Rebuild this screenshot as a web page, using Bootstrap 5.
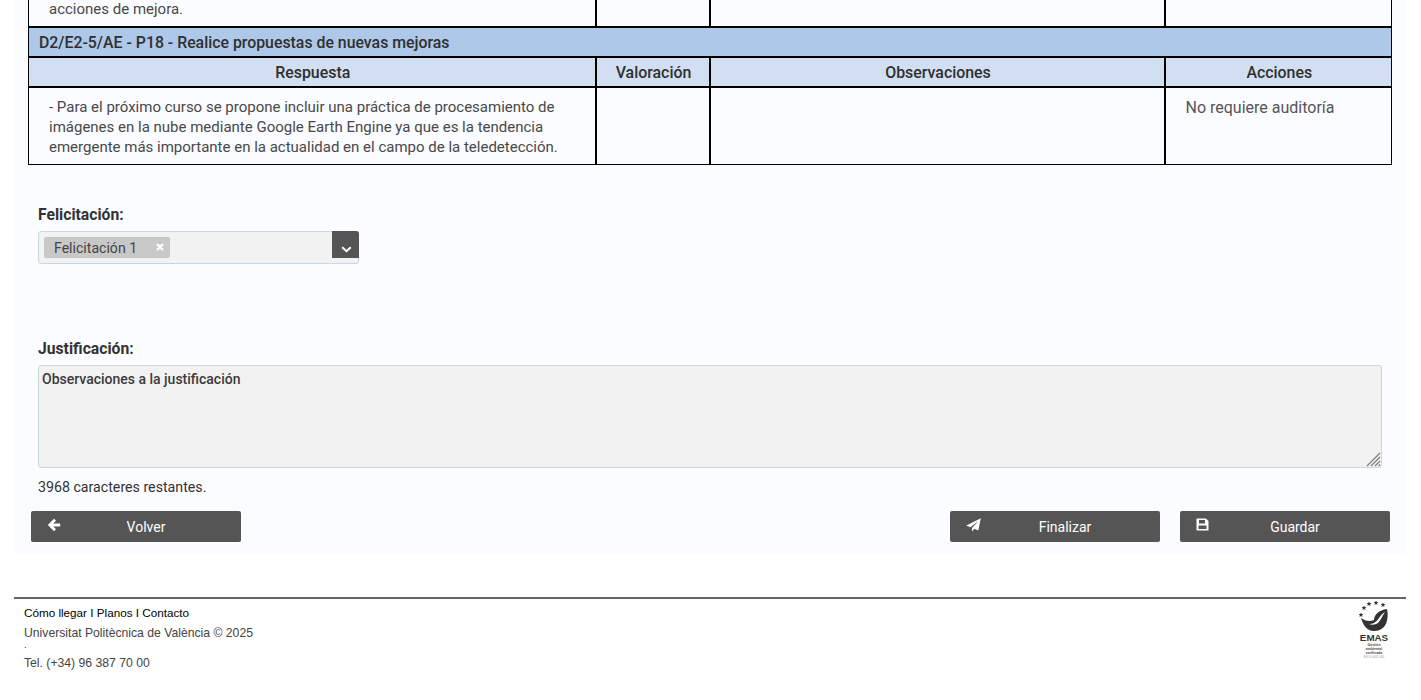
<!DOCTYPE html>
<html lang="es">
<head>
<meta charset="utf-8">
<title>Auditoría</title>
<link href="https://cdn.jsdelivr.net/npm/bootstrap@5.3.0/dist/css/bootstrap.min.css" rel="stylesheet">
<style>
html,body{height:700px;overflow:hidden}
body{background:#fff;font-family:Roboto,sans-serif;color:#333;font-size:15px}
.sheet{margin:-2px 15px 0 14px;background:#fbfcff;height:556px;padding:0 14px}
.audit{width:1363px;table-layout:fixed;border-collapse:collapse;margin:0}
.audit td,.audit th{border:1px solid #000;border-left-width:2px;border-right-width:2px;padding:0;color:#484848;background:transparent}
.audit td:first-child,.audit th:first-child{border-left-width:1px}
.audit td:last-child,.audit th:last-child{border-right-width:1px}
.c1{width:567px}.c2{width:114px}.c3{width:455px}.c4{width:227px}
.audit .prev td{height:29px;vertical-align:top;line-height:20px;padding:1px 0 0 20px;border-bottom-width:2px;border-top:0;font-size:15px}
.audit .title td{background:#adc8e8;height:30px;padding:2px 0 0 10px;font-weight:500;font-size:15.85px;border-width:2px 1px;color:#2f2f2f}
.audit .head th{background:#d2dff2;height:30px;padding:2px 0 0 2px;text-align:center;font-weight:500;font-size:15.9px;border-top-width:2px;border-bottom-width:2px;color:#2f2f2f}
.audit .body td{height:77px;vertical-align:top;padding:9px 20px 0 20px;line-height:20px;font-size:15px}
.audit .body td.act{font-size:16px;line-height:21px;padding-top:9px;color:#555}
.fieldlabel{font-weight:700;font-size:15.7px;color:#333;line-height:20px;margin:0 0 6px 10px}
.lab1{padding-top:40px}
.picker{width:321px;height:33px;margin-left:10px;background:#f2f2f2;border:1px solid #c9d8e0;border-radius:3px;position:relative}
.chip{position:absolute;left:5px;top:5px;width:126px;height:21px;background:#c8c8c8;border-radius:2px;font-size:14.1px;line-height:23px;padding-left:10px;color:#444}
.chip svg{position:absolute;right:6px;top:6px}
.drop{position:absolute;right:-1px;top:-1px;width:27px;height:27px;background:#555;border-radius:0 3px 0 0}
.drop svg{position:absolute;left:9px;top:15px}
.lab2{margin-top:75px}
.notebox{position:relative;margin-left:10px;width:1344px}
.note{width:1344px;height:103px;display:block;background:#f2f2f2;border:1px solid #c9d8e0;border-radius:3px;padding:3px 3px;font:500 14px/20px Roboto,sans-serif;color:#3a3a3a;resize:none}
.note:focus{outline:0}
.grip{position:absolute;right:1px;bottom:1px}
.remain{margin:9px 0 0 10px;font-size:14.2px;line-height:20px;color:#333}
.actions{margin:14px 2px 0 3px;gap:20px}
.darkbtn{width:210px;height:31px;background:#555;color:#fff;border:0;border-radius:2px;font-size:14px;line-height:32px;padding:0 0 0 20px;text-align:center;position:relative}
.darkbtn:hover,.darkbtn:focus{background:#555;color:#fff}
.darkbtn svg{position:absolute;left:16px;top:7px}
.endbar{margin:43px 15px 0 14px;border-top:2px solid #666;height:80px;padding:4px 10px 0;position:relative;font-family:"Liberation Sans",Arial,sans-serif;font-size:12.2px;line-height:20px;color:#444}
.endbar .toplinks{font-size:11.7px;color:#000}
.endbar a{color:#000;text-decoration:none}
.endbar .dot{line-height:4px;height:10px;font-size:10px}
.emas{position:absolute;right:16px;top:0}
</style>
</head>
<body>
<div class="sheet">
  <table class="audit">
    <colgroup><col class="c1"><col class="c2"><col class="c3"><col class="c4"></colgroup>
    <tr class="prev"><td>acciones de mejora.</td><td></td><td></td><td></td></tr>
    <tr class="title"><td colspan="4">D2/E2-5/AE - P18 - Realice propuestas de nuevas mejoras</td></tr>
    <tr class="head"><th>Respuesta</th><th>Valoración</th><th>Observaciones</th><th>Acciones</th></tr>
    <tr class="body"><td>- Para el próximo curso se propone incluir una práctica de procesamiento de imágenes en la nube mediante Google Earth Engine ya que es la tendencia emergente más importante en la actualidad en el campo de la teledetección.</td><td></td><td></td><td class="act">No requiere auditoría</td></tr>
  </table>
  <div class="fieldlabel lab1">Felicitación:</div>
  <div class="picker">
    <span class="chip">Felicitación 1
      <svg width="8" height="8" viewBox="0 0 8 8"><path d="M1 1l6 6M7 1L1 7" stroke="#fff" stroke-width="2.2"/></svg>
    </span>
    <span class="drop"><svg width="11" height="7" viewBox="0 0 11 7"><path d="M1.200 1.200l4.300 4 4.300-4" fill="none" stroke="#fff" stroke-width="2"/></svg></span>
  </div>
  <div class="fieldlabel lab2">Justificación:</div>
  <div class="notebox">
    <textarea class="note" readonly>Observaciones a la justificación</textarea>
    <svg class="grip" width="15" height="15" viewBox="0 0 15 15"><path d="M14 1L1 14M14 5L5 14M14 9L9 14M14 12.500L12.500 14" stroke="#777" stroke-width="1.100"/></svg>
  </div>
  <div class="remain">3968 caracteres restantes.</div>
  <div class="actions d-flex">
    <button type="button" class="btn darkbtn"><svg width="14" height="14" viewBox="0 0 14 14"><path d="M7 .8L.8 7 7 13.200l2-2-2.700-2.700H13.200v-3H6.300L9 2.800z" fill="#fff"/></svg>Volver</button>
    <button type="button" class="btn darkbtn ms-auto"><svg width="15" height="14" viewBox="0 0 15 14"><path d="M14.800.2L12.300 12.500 8.300 10.800 6 13.500V10L12.500 3 4.300 9.300.3 7.500z" fill="#fff"/></svg>Finalizar</button>
    <button type="button" class="btn darkbtn"><svg width="13" height="13" viewBox="0 0 13 13"><path fill-rule="evenodd" d="M1 .5H10l2.500 2.500v9a.5.5 0 0 1-.5.5H1a.5.5 0 0 1-.5-.5V1A.5.5 0 0 1 1 .5zM3 2v3.500h6V2zM2.500 7.500V11h8V7.500z" fill="#fff"/></svg>Guardar</button>
  </div>
</div>
<div class="endbar">
  <div class="toplinks"><a href="#">Cómo llegar</a> I <a href="#">Planos</a> I <a href="#">Contacto</a></div>
  <div>Universitat Politècnica de València © 2025</div>
  <div class="dot">.</div>
  <div>Tel. (+34) 96 387 70 00</div>
  <svg class="emas" width="32" height="60" viewBox="0 0 32 60">
    <g fill="#333">
      <path d="M3 13.500l.7 1.600 1.700.1-1.300 1.100.4 1.700-1.500-.9-1.500.9.400-1.700L.6 15.200l1.700-.1z"/>
      <path d="M6 6.500l.7 1.600 1.700.1-1.300 1.100.4 1.700-1.500-.9-1.500.9.400-1.700L3.600 8.200l1.700-.1z"/>
      <path d="M11 2.500l.7 1.600 1.700.1-1.300 1.100.4 1.700-1.500-.9-1.500.9.400-1.700L8.600 4.200l1.700-.1z"/>
      <path d="M18 1.500l.7 1.600 1.700.1-1.300 1.100.4 1.700-1.500-.9-1.500.9.400-1.700-1.300-1.100 1.700-.1z"/>
      <path d="M25 3.500l.7 1.600 1.700.1-1.300 1.100.4 1.700-1.500-.9-1.500.9.400-1.700-1.300-1.100 1.700-.1z"/>
    </g>
    <path d="M3 19c4 3 9 4 13 2 0-5 5-10 13-11 2 9 0 22-13 22C9 32 5 26 3 19z" fill="#333"/>
    <path d="M11 25c3 0 7-1 10-6 2-3 4-5 6-6-3 4-4 8-7 11-3 2-6 2-9 1z" fill="#fff"/>
    <text x="16" y="42" text-anchor="middle" font-family="Liberation Sans,sans-serif" font-size="9.800" font-weight="700" fill="#333">EMAS</text>
    <text x="16" y="47" text-anchor="middle" font-family="Liberation Sans,sans-serif" font-size="3.500" font-weight="700" fill="#444">Gestión</text>
    <text x="16" y="51" text-anchor="middle" font-family="Liberation Sans,sans-serif" font-size="3.500" font-weight="700" fill="#444">ambiental</text>
    <text x="16" y="55" text-anchor="middle" font-family="Liberation Sans,sans-serif" font-size="3.500" font-weight="700" fill="#444">verificada</text>
    <text x="16" y="59" text-anchor="middle" font-family="Liberation Sans,sans-serif" font-size="3" fill="#999">ES-V-0001-000</text>
  </svg>
</div>
<script src="https://cdn.jsdelivr.net/npm/bootstrap@5.3.0/dist/js/bootstrap.bundle.min.js"></script>
</body>
</html>
